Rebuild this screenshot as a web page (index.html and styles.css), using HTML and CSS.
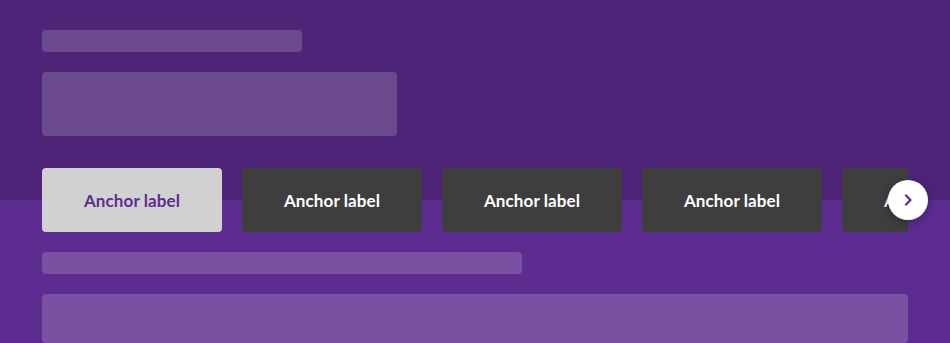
FILE: index.html
```html
<!DOCTYPE html>
<html lang="en">
<head>
    <meta charset="UTF-8">
    <meta name="viewport" content="width=device-width, initial-scale=1.0">
    <title>Anchor nav</title>
    <link rel="stylesheet" href="styles.css">
</head>
<body>

    <div class="page">
        <!-- Плейсхолдеры заголовка -->
        <div class="skeleton skeleton-line"></div>
        <div class="skeleton skeleton-block"></div>

        <!-- Якорная навигация -->
        <nav class="anchors">
            <div class="anchors-track">
                <a class="anchor active" href="#">Anchor label</a>
                <a class="anchor" href="#">Anchor label</a>
                <a class="anchor" href="#">Anchor label</a>
                <a class="anchor" href="#">Anchor label</a>
                <a class="anchor" href="#">Anchor label</a>
            </div>
            <button class="anchors-next" aria-label="Next">
                <svg width="10" height="12" viewBox="0 0 10 12">
                    <path d="M3 1.5 L7.5 6 L3 10.5" fill="none" stroke="#5c2d91" stroke-width="2.2" stroke-linecap="round" stroke-linejoin="round"/>
                </svg>
            </button>
        </nav>

        <div class="skeleton skeleton-line wide light"></div>
        <div class="skeleton skeleton-block full light"></div>
    </div>

</body>
</html>
```

FILE: styles.css
```css
body {
    margin: 0;
    font-family: Lato, "Open Sans", sans-serif;
    overflow: hidden;
}

.page {
    height: 343px;
    padding: 30px 42px 0;
    box-sizing: border-box;
    overflow: hidden;
    background: linear-gradient(to bottom, #4e2479 200px, #5c2c90 200px);
}

/* Серые полоски-заглушки */
.skeleton {
    background: #6a4a8d;
    border-radius: 4px;
}

.skeleton-line {
    width: 260px;
    height: 22px;
}

.skeleton-block {
    width: 355px;
    height: 64px;
    margin-top: 20px;
}

.skeleton.light {
    background: #7a50a3;
}

.skeleton-line.wide {
    width: 480px;
    margin-top: 20px;
}

.skeleton-block.full {
    width: 866px;
    height: 49px;
    margin-top: 20px;
}

.anchors {
    position: relative;
    width: 866px;
    margin-top: 32px;
}

.anchors-track {
    display: flex;
    gap: 20px;
    overflow: hidden;
}

.anchor {
    flex: 0 0 180px;
    height: 64px;
    display: flex;
    align-items: center;
    justify-content: center;
    background: #3e3e3e;
    color: #fff;
    font-size: 17px;
    font-weight: 700;
    letter-spacing: 0.1px;
    text-decoration: none;
    border-radius: 4px;
    white-space: nowrap;
}

.anchor.active {
    background: #d1d1d1;
    color: #5c2d91;
}

.anchors-next {
    position: absolute;
    right: -20px;
    top: 12px;
    width: 40px;
    height: 40px;
    border: none;
    border-radius: 50%;
    background: #fff;
    box-shadow: 0 2px 8px rgba(0, 0, 0, 0.3);
    display: flex;
    align-items: center;
    justify-content: center;
    padding: 0;
    cursor: pointer;
}
```
